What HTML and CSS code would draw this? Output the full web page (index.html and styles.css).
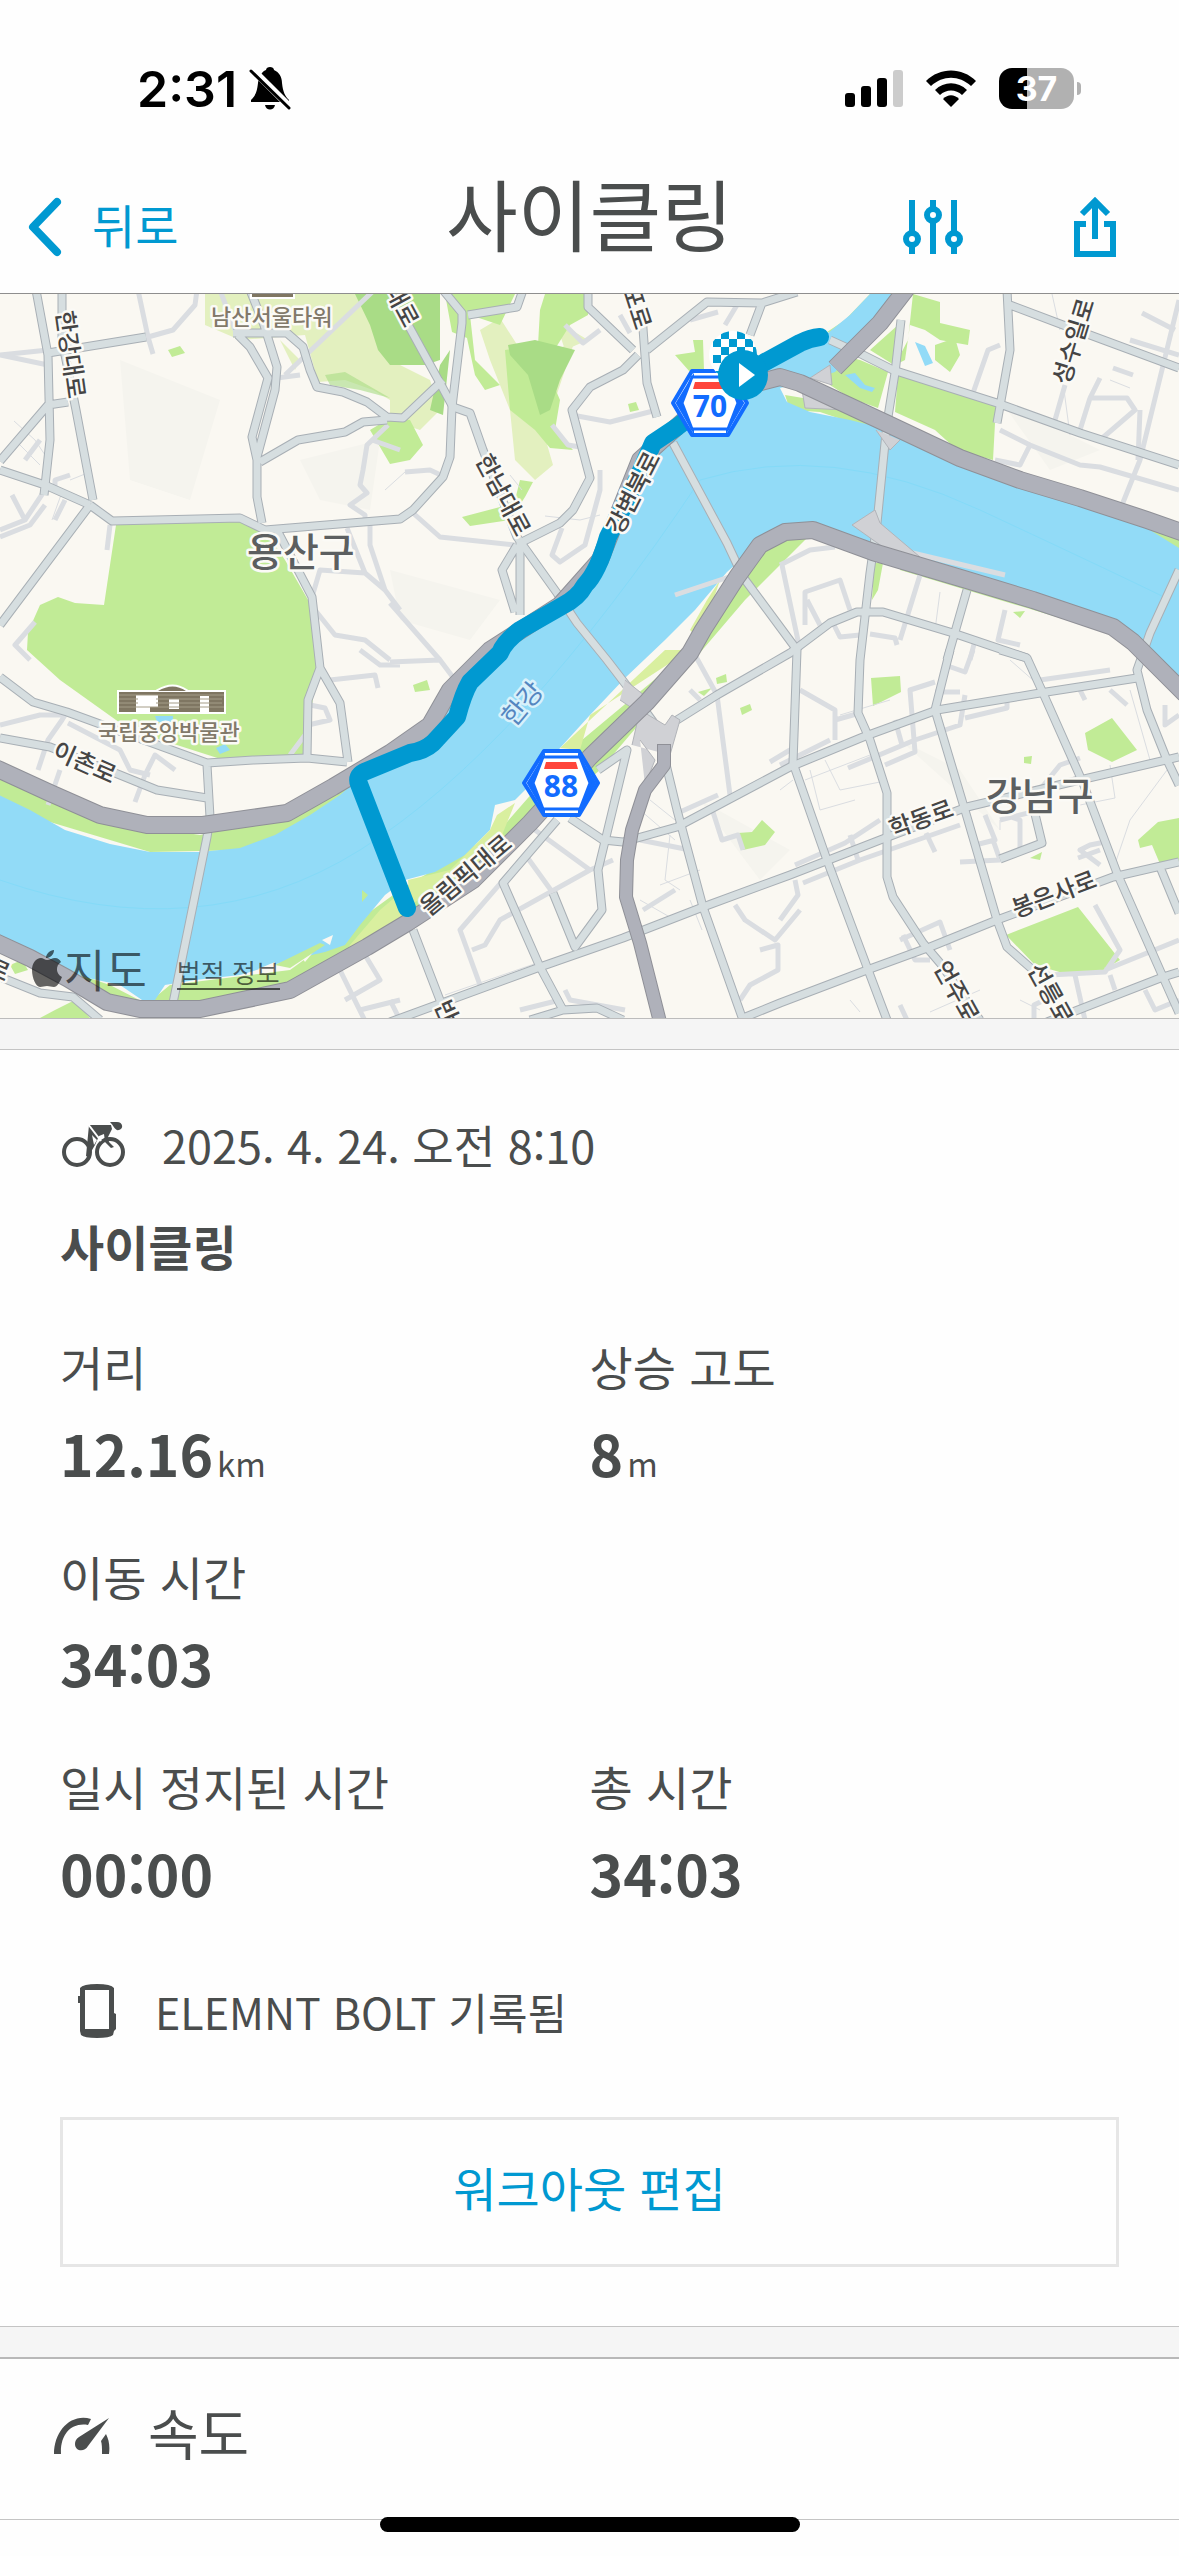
FILE: index.html
```html
<!DOCTYPE html>
<html lang="ko">
<head>
<meta charset="utf-8">
<meta name="viewport" content="width=device-width, initial-scale=1">
<title>사이클링</title>
<link rel="stylesheet" href="styles.css">
</head>
<body>
<header class="top">
  <div class="status">
    <div class="status-group">
      <span class="clock">2:31</span>
      <svg class="bell" width="42" height="44" viewBox="0 0 42 44" aria-hidden="true">
        <path d="M2 33c5-5 6-9 7-17C10 8 14 4 17 3c0-4 8-4 8 0 5 2 8 7 8 13 1 9 3 13 7 17v2H2zM16 38h10c-1 6-9 6-10 0z"/>
        <path d="M3 2l38 38" stroke="#fff" stroke-width="7"/>
        <path d="M2 4l38 37" stroke="#000" stroke-width="3" stroke-linecap="round"/>
      </svg>
    </div>
    <div class="status-group status-right">
      <svg width="58" height="38" viewBox="0 0 58 38" aria-hidden="true">
        <rect y="23" width="10" height="14" rx="3"/><rect x="16" y="16" width="10" height="21" rx="3"/>
        <rect x="32" y="8" width="10" height="29" rx="3"/><rect x="48" width="10" height="37" rx="3" fill="#ccc"/>
      </svg>
      <svg width="52" height="38" viewBox="0 0 52 38" aria-hidden="true">
        <path d="M1 11C15-3 37-3 51 11l-5 5C34 5 18 5 6 16z"/>
        <path d="M10 20c9-9 23-9 32 0l-5 5c-6-6-16-6-22 0z"/>
        <path d="M18 29c5-5 11-5 16 0l-8 8z"/>
      </svg>
      <div class="battery"><span>37</span></div>
    </div>
  </div>
  <nav class="nav">
    <a class="back" href="#">
      <svg width="36" height="60" viewBox="0 0 36 60" aria-hidden="true"><path d="M31 5L7 30l24 25" fill="none" stroke="currentColor" stroke-width="8" stroke-linecap="round" stroke-linejoin="round"/></svg>
      <span>뒤로</span>
    </a>
    <h1 class="title">사이클링</h1>
    <div class="actions">
      <button type="button" class="icon-button" aria-label="설정">
        <svg width="60" height="54" viewBox="0 0 60 54"><g fill="none" stroke="currentColor" stroke-width="6"><path d="M9 0v33M9 45v9M30 0v9M30 21v33M51 0v33M51 45v9"/><circle cx="9" cy="39" r="6"/><circle cx="30" cy="15" r="6"/><circle cx="51" cy="39" r="6"/></g></svg>
      </button>
      <button type="button" class="icon-button" aria-label="공유">
        <svg width="42" height="60" viewBox="0 0 42 60"><path d="M12 27H3v30h36V27h-9M21 42V4M8 17L21 4l13 13" fill="none" stroke="currentColor" stroke-width="6"/></svg>
      </button>
    </div>
  </nav>
</header>

<main>
<section class="map" aria-label="지도">
<svg class="map-art" viewBox="0 294 1179 724">
  <defs>
    <g id="roads">
      <path d="M36 290L48 355 50 440 44 495M62 290V340L76 410 93 500M90 505L0 625M0 461L48 405 68 402M48 353L146 337M0 470L45 485 90 505M90 505L112 521 240 518 265 530 400 519 413 510 443 477 450 457 452 407 462 323 462 313 443 290"/>
      <path d="M250 290L264 325 277 367 275 390 257 457V497L262 523M238 335L250 347 268 378 252 437 257 460M233 333H287L303 347 310 370 317 387 343 392 367 402 387 417 403 418 443 380M260 462L298 440 345 432 363 422 387 420"/>
      <path d="M277 530L312 597 320 668 340 703 348 762M320 668L308 700 307 757M400 310L440 383 453 407 470 413 483 450 517 537 557 593 577 623 607 660 630 690 657 727 677 810 703 907 743 1020"/>
      <path d="M468 315L517 307 523 290M588 290V307L633 350M642 315L647 383 657 417M647 350L707 302 762 303 797 292M762 303L750 335M638 355L623 370 590 387 572 410 590 478 573 510 560 523 520 543V615M517 545L502 570 515 612"/>
      <path d="M673 443L727 543 743 577 797 650 793 763 827 860 867 967 887 1020M901 320L895 373 887 423 877 523 870 573 860 660 858 713 870 740 887 793V877L893 897 923 943 940 963 980 1020"/>
      <path d="M830 340L863 355 893 370 997 403 1080 433 1179 465M1007 290L1010 350 997 423M1010 305L1063 325 1179 368M1179 570L1150 633 1137 670 1147 710 1167 760 1179 785"/>
      <path d="M0 677L33 702 67 712 207 763 253 760 307 758 347 762M0 738L50 747 120 775 157 790 207 798M207 765L210 817 207 837 173 1003M0 977L40 993 73 997 100 1020"/>
      <path d="M557 820L503 883 540 967 563 1010 597 1008 623 1020M530 1020L563 1010M570 818L603 840 623 842 677 827 790 767 863 737 937 710 1040 693 1137 678M390 1022L540 967 623 938 703 907 790 875 880 840 967 807 1067 783 1179 757"/>
      <path d="M743 1018L780 1003 867 970 930 947 997 920 1113 877 1179 862M950 650L935 710 967 817 997 920 1007 947 1033 970M1000 650L1027 658 1043 693 1083 783 1117 873 1163 977 1179 1013M1047 1022L1163 977 1179 972M1160 867L1179 913"/>
      <path d="M598 770L627 750 607 833 598 870 602 910 575 947 553 893M677 720L717 695 790 653 830 623 857 612H883L953 633 1027 658M967 590L947 660M413 930L443 1008M1035 814L1042 843 1000 859"/>
    </g>
    <g id="highways">
      <path d="M-9 766L0 770 50 793 100 815 147 825H203L287 813 333 787 390 753 430 725 450 690 490 650 560 605 600 560 640 460 690 415 750 385 780 377 800 383 890 425 960 458 1020 480 1080 498 1147 520 1190 535"/>
      <path d="M-9 940L30 958 67 978 107 1002 140 1009H200L290 990 367 947 407 923 473 880 530 823 590 757 647 702 690 653 703 630 737 577 760 545 785 532 813 530 873 552 967 580 1033 600 1113 627 1133 642 1185 694"/>
      <path d="M907 288L880 323 835 368"/>
    </g>
  </defs>
  <rect y="294" width="1179" height="724" fill="#faf8f2"/>
  <path class="relief" d="M120 360L220 400 190 500 130 480zM300 460L380 440 370 510 320 500zM390 570L500 600 470 640 400 620zM1000 400L1100 450 1050 470zM700 800L790 850 760 880zM900 740L1000 830 960 770zM240 700L290 680 270 740z"/>

  <g class="park-pale">
    <path d="M205 294H390V400L373 390 345 380 318 382 305 335 240 340 205 325zM390 360L430 380 440 410 420 430 390 420zM480 330L500 318 530 365 575 340 555 400 540 420 553 465 535 480 515 460 510 410 490 360z"/>
    <path d="M555 320L588 340 565 350zM280 340L300 360 295 370z"/>
  </g>
  <g class="park">
    <path d="M116 525L240 520 265 530 285 560 311 605 317 665 306 755 230 762 130 730 60 680 27 650 28 632 40 605 58 597 75 603 104 605z"/>
    <path d="M370 430L390 418 410 420 423 445 410 460 390 464zM445 294H515L500 325 470 315 475 360 500 385 485 390 475 375 467 338 452 332zM545 294H588V315L570 325 545 365 560 400 555 430 573 450 550 448 535 430 510 410 505 350 538 345 540 310z"/>
    <path d="M462 517L500 507 515 500 520 480 533 482 525 497 510 520 470 526zM168 350L180 346 185 353 172 357zM675 355L695 352 693 340H703L704 370 690 372zM628 404L636 402 639 410 630 412zM413 685L427 680 430 690 415 692z"/>
    <path d="M827 332L845 320 870 294H885L850 338zM785 395L815 400 860 415 880 430 850 422 820 412 790 410zM913 294L940 302V323L970 330 968 345 940 340 925 330 910 325 905 360 895 365 908 340zM935 345L955 338 960 355 950 372 935 360z"/>
    <path d="M870 350L898 325 894 365zM830 368L840 355 860 360 888 372 878 408 850 398 830 385zM898 374L996 405 993 460 957 450 935 430 895 412z"/>
    <path d="M874 563L883 563 878 590 872 600zM871 678L900 676 901 692 873 706zM1085 733L1112 718 1137 750 1112 762 1088 750zM1024 757L1032 756 1031 764 1024 763zM1138 840L1158 822 1179 818V862L1160 864 1152 845 1140 848zM1006 935L1078 907 1120 960 1100 972 1070 975 1035 965z"/>
    <path d="M698 692L712 688 704 696zM716 678L726 674 727 682 717 684zM740 708L750 704 752 710 742 715zM738 833L752 832 762 820 775 832 765 845 743 850zM1030 858L1042 852 1040 860zM1013 612L1025 611 1020 618zM10 965L22 960 28 970 15 974zM55 1010L75 1000 90 1018H40z"/>
  </g>
  <g class="park-deep">
    <path d="M355 294H440V360L425 365H390L378 350 370 325zM508 345L535 340 575 350 560 380 550 410 540 415 528 375 510 355zM440 365L450 350 443 415 430 410z"/>
    <path d="M20 785L45 795 85 822 60 812zM325 375L345 372 390 398 360 390 330 385z" opacity=".6"/>
  </g>
  <path class="park" d="M-5 770L100 820 200 835 300 815 350 785V800L250 850 150 852 50 822 -5 798zM65 970L110 985 147 1004 170 985 290 970 400 890 500 830 570 750 690 650 735 585 790 520 815 530 745 600 600 770 410 930 290 990 200 1012 107 1005zM900 550L1000 575 1080 600 1140 632 1100 630 900 570zM1110 518L1179 530V556z"/>

  <path class="water" d="M-5 793L30 810 65 830 110 844 150 852H200L240 848 275 835 310 815 340 795 355 782 390 753 430 720 450 690 490 650 560 605 600 560 640 460 690 420 765 372 790 350 828 333 850 315 870 294H910L835 372 805 382 780 388 787 402 810 412 850 420 890 430 960 462 1020 480 1080 502 1150 530 1179 548V685L1150 660 1122 632 1100 618 1033 598 960 575 910 552 870 548 813 525 790 524 760 543 727 572 695 610 665 640 625 678 590 715 560 748 535 780 515 800 495 805 490 830 465 855 435 872 405 880 385 895 360 925 345 945 325 952 290 960 240 975 195 980 165 985 155 1000H142L120 985 70 974 30 955 -5 935z"/>
  <path class="water" d="M915 342L925 346 933 363 925 366zM845 375L855 373 865 385 875 388 872 392 860 388zM155 716H173V722H157zM216 748L225 744 230 750 220 754z"/>
  <g class="sandbar"><path d="M258 969L275 962 275 970 265 974zM300 955L315 950 305 962zM322 940L333 935 330 945z" fill="#faf8f2"/><path d="M275 965L320 943 325 945 290 968zM362 890L368 895 362 902z" fill="#c1eb96"/><path d="M350 945L380 910 400 893 403 915 345 955zM497 815L515 803 500 840 470 870 410 905 408 880 450 870 490 830zM590 715L690 650H665L560 748 580 750zM690 630L707 600 720 580 700 640z" fill="#d9ef9f"/></g>
  <path d="M0 880Q200 950 360 850T700 480Q830 440 980 510T1170 600M0 880" fill="none" stroke="#84daf8" stroke-width="1"/>

  <g class="road-thin">
    <path d="M14 421L35 440 45 455M18 443L40 465M70 480L85 474M52 520L62 492M385 490L405 472M510 475L522 490M545 516L580 520 600 515M1064 390L1070 435M1052 294L1060 330M940 592L935 630M1110 380L1130 388M650 800L675 820M640 810L675 840M640 900L675 920M670 835L665 880 680 890M700 870L660 885M810 770L820 810 855 800M825 760L840 790 880 782M805 780L870 755M445 995L540 962M780 790L793 780M1010 660L1050 695M1130 690L1150 760M1167 770L1130 820 1113 870M1000 820V830M1110 765L1115 798 1080 805M690 900L702 930M840 715L890 700M930 1012L980 990M1020 1000L1040 1010M850 1000L860 1012"/>
  </g>
  <g class="road-minor">
    <path d="M138 290L148 337 153 354M148 337L173 330 195 305 197 290M0 355L48 365M0 355L48 350M220 290L235 330M390 275L285 375M0 530L25 520 45 490M25 520L12 495M0 537L30 525 45 505M55 490V480L70 475M65 500L55 520M110 525L107 550M25 460L40 440M35 622L15 645 30 660M312 597L320 570 365 573 385 590 400 610M347 528L365 573M370 525V545L385 590M315 610L335 635 365 640 390 660M400 450L372 440M388 425L367 445 363 470 360 485 367 493 350 505 365 515V525M277 378L300 375"/>
    <path d="M413 513L440 537 515 545M390 603L440 660M562 528L552 555 560 562 585 545 600 490V470M572 415L610 422 657 410M620 315L630 333M690 320L718 312M565 325L583 343 600 330M737 305L725 325M552 425L568 445 580 447M445 477L430 470 405 472M675 595L750 570M780 565L810 550 835 547M782 565L800 650M805 625V592L840 580 850 610M807 600L820 625M834 625L840 637 860 635M870 634L895 638 897 645M920 575L900 640M1005 610L998 640 1020 645M975 640L970 660M900 550L1005 575M973 393L988 350 1000 345M1000 430L1030 445 1080 465 1100 467 1179 490M1030 445L1020 465 995 460M1055 420L1065 385M1080 430L1090 398H1127L1135 410 1100 440M1090 398L1100 378M1113 368L1133 375M1140 410L1138 460M1120 510L1140 460 1179 300M1142 313L1175 330M1130 340L1179 355"/>
    <path d="M0 725L40 715 65 715 62 720 48 740 38 770M68 723L120 750 130 770 150 775M60 770L48 805M135 802L145 775 155 755 175 770M310 705L325 708 330 720 308 725M290 755L305 735M330 680L375 675 378 688M360 650L380 665 400 665M390 662L440 660 455 680M535 830L590 870 613 860M590 870L500 920 485 945 472 950M553 893L527 857M525 855L460 930 480 985M695 655L717 695 730 795M690 690L700 700M770 762L790 750M680 812L718 795M713 812L722 840 738 835 743 850M735 905L745 920 775 940 800 910M760 950L778 945V970L750 985 740 1000M643 910L675 890M690 850L640 840M390 1000L400 1020M335 960L372 1035M345 1000L380 980 365 955M360 1010L400 1000"/>
    <path d="M780 765L830 740M800 690L835 710V740M835 720L860 713M848 768L915 740 960 725 965 695M885 765L915 752 910 690 935 682M895 720L902 745M965 718L1007 708 1007 700M960 692H935M945 665L965 672 973 650M795 865L845 843 880 820M850 835L858 860M803 883L860 860 960 825M795 880L798 895 780 920M985 815L995 840 975 845M993 840L1000 860 960 862M1005 815L1020 820V850M1038 792L1060 765 1080 758M1000 820L1040 810M1078 858L1100 850M1100 865L1080 850 1090 845 1105 842M900 940L940 922 950 950M903 935L915 960H930M1095 905L1120 950 1105 972 1050 975 1033 965M1105 970L1179 940M1075 975L1085 1020M1110 975L1115 990M1145 990L1155 1010 1179 1000M1034 1020V1005L1055 995M900 1005L907 1020M1080 690L1085 700M1110 690L1127 705M1040 680L1110 670M1165 705V725L1179 715M926 833L935 852M520 1010L560 1000M565 990L570 1000 625 1010"/>
  </g>
  <use href="#roads" class="road-case"/>
  <use href="#roads" class="road-fill"/>
  <g class="ramps"><path d="M852 525L875 510 880 523 920 557 890 552zM810 378L830 365 832 385zM802 390L805 408 845 410M876 430L890 450 900 440M625 680L650 700 635 710 620 700M632 745L640 710 665 725 672 715 680 720 670 755M645 785L655 760 640 740" /></g>
  <use href="#highways" class="hw-case"/>
  <use href="#highways" class="hw-fill"/>
  <path class="hw-case thin" d="M664 744V765L645 790 632 830 627 860 626 897 640 943 660 1022"/>
  <path class="hw-fill thin" d="M664 745V765L645 790 632 830 627 860 626 897 640 943 660 1022"/>

  <path class="route" d="M820 337Q810 338 800 343L765 362 735 382 677 427 653 443 637 480 608 537Q598 572 585 585 578 598 562 606L520 630Q504 642 500 653L470 682Q463 694 457 717L433 743Q424 751 410 753L364 772Q356 776 359 784L407 908"/>

  <g class="landmark">
    <path d="M119 692H224V712H119zM158 691Q173 682 186 691zM252 294H293V297H252z"/>
    <path d="M138 697h18v8h-8v6h-10zM171 701h6v6h-6zM202 698h5v14h-5z" fill="#fff"/>
    <path d="M119 695h105M119 699h19M156 699h66M119 703h19M156 703h66M119 707h105" stroke="#a59d88" stroke-width="1"/>
  </g>
  <g class="labels">
    <g class="poi"><text x="211" y="325">남산서울타워</text><text x="98" y="740">국립중앙박물관</text></g>
    <g class="district"><text x="247" y="566">용산구</text><text x="986" y="810">강남구</text></g>
    <g class="road-name">
      <text transform="translate(56 312) rotate(82)">한강대로</text>
      <text transform="translate(51 757) rotate(24)">이촌로</text>
      <text transform="translate(475 460) rotate(62)">한남대로</text>
      <text transform="translate(384 290) rotate(62)">대로</text>
      <text transform="translate(622 289) rotate(72)">포로</text>
      <text transform="translate(621 536) rotate(-63)">강변북로</text>
      <text transform="translate(1069 386) rotate(-73)">성수일로</text>
      <text transform="translate(429 917) rotate(-40)">올림픽대로</text>
      <text transform="translate(893 838) rotate(-20)">학동로</text>
      <text transform="translate(1016 918) rotate(-21)">봉은사로</text>
      <text transform="translate(933 967) rotate(61)">언주로</text>
      <text transform="translate(1027 969) rotate(61)">선릉로</text>
      <text transform="translate(434 1005) rotate(66)">반포</text>
      <text transform="translate(-15 973) rotate(24)">로</text>
    </g>
    <text class="river-name" transform="translate(514 728) rotate(-50)">한강</text>
  </g>
  <g id="shield-88">
    <path class="shield-outer" d="M544 751H579L598 783 579 815H544L524 783z"/>
    <path class="shield-side" d="M543 760L529 783 543 807zM580 760L594 783 580 807z"/>
    <path class="shield-inner" d="M543 757H580L590 783 580 809H543L533 783z"/>
    <path d="M546 762H576L578 769H544z" fill="#ff453a"/>
    <text class="shield-text" x="561" y="797">88</text>
  </g>
  <g id="shield-70">
    <path class="shield-outer" d="M692 371H728L747 403 728 435H692L673 403z"/>
    <path class="shield-side" d="M692 380L678 403 692 427zM728 380L742 403 728 427z"/>
    <path class="shield-inner" d="M692 377H728L738 403 728 429H692L682 403z"/>
    <path d="M695 382H726L728 389H693z" fill="#ff453a"/>
    <text class="shield-text" x="710" y="417">70</text>
  </g>
  <clipPath id="flag-clip"><circle cx="733" cy="355" r="24"/></clipPath>
  <g clip-path="url(#flag-clip)">
    <rect x="709" y="331" width="48" height="48" fill="#fff"/>
    <path d="M713 335H757M713 351H757M713 367H757" stroke="#0099d1" stroke-width="8" stroke-dasharray="8 8" stroke-dashoffset="8"/>
    <path d="M713 343H757M713 359H757M713 375H757" stroke="#0099d1" stroke-width="8" stroke-dasharray="8 8"/>
  </g>
  <circle cx="743" cy="375" r="25" fill="#0099d1"/><path d="M739 363v24l16-12z" fill="#fff"/>
</svg>
<div class="map-credit">
  <span class="map-brand">
    <svg width="30" height="38" viewBox="0 0 30 38" aria-hidden="true"><path d="M15 10c3 0 5-2 8-2 3 0 5 2 6 4-6 4-5 12 1 15-2 5-5 10-8 10-3 0-4-1-7-1s-4 1-7 1C4 37 0 28 0 20 0 13 4 8 9 8c2 0 4 2 6 2zM14 8c0-4 4-8 8-8 0 4-3 8-8 8z"/></svg>
    <span>지도</span>
  </span>
  <a class="legal" href="#">법적 정보</a>
</div>
</section>

<section class="summary">
  <p class="date-row">
    <svg width="64" height="48" viewBox="0 0 64 48" aria-hidden="true">
      <g fill="none" stroke="currentColor" stroke-width="4"><circle cx="15" cy="31" r="13"/><circle cx="48" cy="31" r="13"/></g>
      <path d="M27 4h22l1 4-4 8 1 5 5 5-3 1-6-6-1-8-5 2-4 9-7 12-2-1zM30 14l2 10 3-5z" fill-rule="evenodd"/>
      <path d="M26 3l13 17" stroke="#fff" stroke-width="2"/>
      <path d="M48 1h7c6 0 7 7 2 8-4 1-5-4-9-8z"/>
    </svg>
    <time datetime="2025-04-24T08:10">2025. 4. 24. 오전 8:10</time>
  </p>
  <h2 class="name">사이클링</h2>
  <dl class="stats">
    <div><dt>거리</dt><dd>12.16<small>km</small></dd></div>
    <div><dt>상승 고도</dt><dd>8<small>m</small></dd></div>
    <div class="wide"><dt>이동 시간</dt><dd>34:03</dd></div>
    <div><dt>일시 정지된 시간</dt><dd>00:00</dd></div>
    <div><dt>총 시간</dt><dd>34:03</dd></div>
  </dl>
  <p class="device">
    <svg width="40" height="56" viewBox="0 0 40 56" aria-hidden="true"><path fill-rule="evenodd" d="M3 5Q6 1 20 1T37 5V30l2 1V46l-2 2-1 4Q33 55 20 55T4 52L3 48V20H1V13H3zM8 7V46H32V7z"/></svg>
    <span>ELEMNT BOLT 기록됨</span>
  </p>
  <button type="button" class="edit">워크아웃 편집</button>
</section>

<section class="speed">
  <svg width="56" height="38" viewBox="0 0 56 38" aria-hidden="true"><path d="M0 37C0 14 17-4 37 2l-3 6C17 5 6 18 7 37zM55 1L34 29c-4 7-13 5-13-2 0-3 1-5 4-7zM52 17c3 6 4 12 3 20h-7c0-6 0-10-1-13z"/></svg>
  <h2>속도</h2>
</section>
</main>
<div class="home-indicator"></div>
</body>
</html>
```

FILE: styles.css
```css
* { box-sizing: border-box; margin: 0; padding: 0; }

body {
  min-height: 100vh;
  overflow-x: hidden;
  background: #fefefe;
  color: #4a4d4d;
  font-family: "Noto Sans CJK KR", sans-serif;
  font-size: 47px;
  line-height: 72px;
}

a { color: inherit; text-decoration: none; }
button { border: 0; background: none; color: #0099d1; font: inherit; cursor: pointer; }
svg { display: block; flex: none; fill: currentColor; }

/* status bar */
.top { border-bottom: 1px solid #8e8e8e; background: #fefefe; }
.status {
  display: flex;
  align-items: center;
  justify-content: space-between;
  height: 137px;
  padding: 40px 105px 0 137px;
  color: #000;
  font-family: Inter, sans-serif;
}
.status-group { display: flex; align-items: center; gap: 12px; }
.status-right { gap: 22px; }
.clock { font-size: 50px; font-weight: 600; line-height: 60px; }
.battery {
  position: relative;
  width: 75px;
  height: 41px;
  border-radius: 13px;
  background: linear-gradient(90deg, #000 28px, #b1b1b1 28px);
  color: #fff;
  font-size: 34px;
  font-weight: 700;
  line-height: 42px;
  text-align: center;
}
.battery::after {
  content: "";
  position: absolute;
  left: 78px;
  top: 14px;
  width: 4px;
  height: 13px;
  border-radius: 0 4px 4px 0;
  background: #b1b1b1;
}

/* navigation */
.nav {
  display: grid;
  grid-template-columns: 1fr auto 1fr;
  align-items: center;
  height: 156px;
  padding: 0 26px;
}
.back { display: flex; align-items: center; gap: 30px; padding-top: 24px; color: #0099d1; }
.back span { padding-bottom: 6px; }
.title { padding-bottom: 6px; font-size: 78px; font-weight: 400; line-height: 112px; }
.actions { display: flex; justify-content: flex-end; gap: 111px; padding: 24px 37px 0 0; }
.icon-button { display: flex; align-items: center; }

/* map */
.map { position: relative; border-bottom: 1px solid #bcbcbc; }
.map-art { width: 100%; height: auto; }
.relief { fill: #f5f4ee; }
.water { fill: #92dbf7; }
.park { fill: #c1eb96; }
.park-pale { fill: #e3f0bf; }
.park-deep { fill: #a9dc86; }
.road-thin, .road-minor, .road-case, .road-fill, .hw-case, .hw-fill, .route { fill: none; stroke-linejoin: round; }
.road-thin { stroke: #dadde1; stroke-width: 1; }
.road-minor { stroke: #dadde1; stroke-width: 5; }
.road-case { stroke: #a8afb5; stroke-width: 9; }
.road-fill { stroke: #d6dee0; stroke-width: 7; }
.ramps { fill: #d0d1d5; stroke: #b2b4b9; stroke-width: 1; }
.hw-case { stroke: #8f9097; stroke-width: 18; }
.hw-fill { stroke: #afb1ba; stroke-width: 16; }
.hw-case.thin { stroke-width: 14; }
.hw-fill.thin { stroke-width: 12; }
.route { stroke: #0099d1; stroke-width: 18; stroke-linecap: round; }
.landmark { fill: #7f7662; stroke: #fff; stroke-width: 4; paint-order: stroke; }
.labels text { paint-order: stroke; stroke: #fbfaf6; stroke-width: 5; stroke-linejoin: round; }
.poi { fill: #82796a; font-size: 22px; font-weight: 500; }
.district { fill: #5c5f60; font-size: 39px; font-weight: 500; }
.road-name { fill: #454545; font-size: 24px; font-weight: 500; }
.labels .river-name { fill: #5486c0; stroke: #d8f1fb; font-size: 26px; }
.shield-outer { fill: #fff; stroke: #126cff; stroke-width: 4; stroke-linejoin: round; }
.shield-inner { fill: #fff; stroke: #126cff; stroke-width: 3; stroke-linejoin: round; }
.shield-side { fill: #126cff; stroke: #126cff; stroke-width: 4; }
.shield-text { fill: #126cff; font: 700 30px "Noto Sans", sans-serif; text-anchor: middle; }
.map-credit {
  position: absolute;
  left: 32px;
  bottom: 16px;
  display: flex;
  align-items: center;
  gap: 30px;
  color: rgba(0, 0, 0, .6);
}
.map-brand { display: flex; align-items: center; gap: 2px; font-size: 45px; line-height: 66px; }
.legal { margin-top: 8px; border-bottom: 2px solid; font-size: 26px; line-height: 32px; }

/* workout summary */
main { background: #f5f5f5; }
.summary {
  margin-top: 30px;
  padding: 59px 60px;
  border-top: 1px solid #c4c4c4;
  border-bottom: 1px solid #c4c4c4;
  background: #fefefe;
}
.date-row { display: flex; align-items: center; gap: 36px; padding-left: 2px; font-size: 45px; }
.name { margin-top: 28px; font-size: 48px; font-weight: 700; }
.stats { display: grid; grid-template-columns: 1fr 1fr; row-gap: 46px; margin-top: 49px; }
.stats .wide { grid-column: span 2; }
.stats dt { line-height: 72px; }
.stats dd { margin-top: 8px; font-size: 57px; font-weight: 700; line-height: 84px; }
.stats small { margin-left: 4px; font-size: 33px; font-weight: 400; line-height: 1; }
.device { display: flex; align-items: center; gap: 38px; margin-top: 61px; padding-left: 17px; font-size: 43px; }
.edit { width: 100%; height: 150px; margin-top: 70px; padding-bottom: 10px; border: 3px solid #e6e6e6; }

/* speed card */
.speed {
  display: flex;
  align-items: center;
  gap: 38px;
  height: 163px;
  margin-top: 30px;
  padding: 0 54px 6px;
  border-top: 2px solid #b8b8b8;
  border-bottom: 1px solid #c4c4c4;
  background: #fefefe;
}
.speed h2 { padding-bottom: 10px; font-size: 55px; font-weight: 400; }

.home-indicator {
  position: fixed;
  left: 50%;
  bottom: 24px;
  width: 420px;
  height: 15px;
  margin-left: -210px;
  border-radius: 8px;
  background: #000;
}
```
